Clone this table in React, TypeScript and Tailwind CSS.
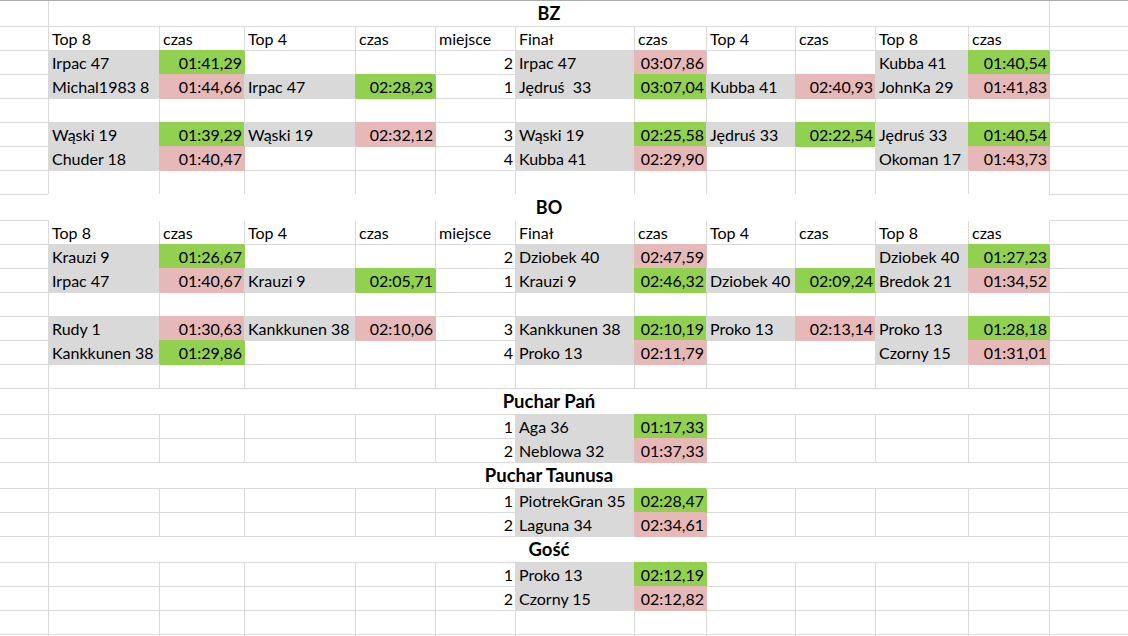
import * as React from "react";

type Fill = "gray" | "green" | "pink" | "white";
type Cell = { t?: string; f?: Fill; r?: boolean };

const FILL: Record<Fill, string> = {
  gray: "bg-[#d9d9d9] border-[#d9d9d9] shadow-[-1px_-1px_0_0_#d9d9d9]",
  green: "bg-[#92d050] border-[#92d050] shadow-[-1px_-1px_0_0_#92d050]",
  pink: "bg-[#e6b8b7] border-[#e6b8b7] shadow-[-1px_-1px_0_0_#e6b8b7]",
  white: "bg-white border-white shadow-[-1px_-1px_0_0_#ffffff]",
};

const n = (t: string): Cell => ({ t, f: "gray" });
const g = (t: string): Cell => ({ t, f: "green", r: true });
const p = (t: string): Cell => ({ t, f: "pink", r: true });
const m = (t: string): Cell => ({ t, r: true });
const e: Cell = {};

const header: Cell[] = ["Top 8", "czas", "Top 4", "czas", "miejsce", "Finał", "czas", "Top 4", "czas", "Top 8", "czas"].map(
  (t) => ({ t })
);
const blank: Cell[] = Array(11).fill(e);

type Row = { title?: string; big?: boolean; whiteTitle?: boolean; cells?: Cell[] };

const rows: Row[] = [
  { title: "BZ", big: true },
  { cells: header },
  { cells: [n("Irpac 47"), g("01:41,29"), e, e, m("2"), n("Irpac 47"), p("03:07,86"), e, e, n("Kubba 41"), g("01:40,54")] },
  {
    cells: [n("Michal1983 8"), p("01:44,66"), n("Irpac 47"), g("02:28,23"), m("1"), n("Jędruś  33"), g("03:07,04"), n("Kubba 41"), p("02:40,93"), n("JohnKa 29"), p("01:41,83")],
  },
  { cells: blank },
  {
    cells: [n("Wąski 19"), g("01:39,29"), n("Wąski 19"), p("02:32,12"), m("3"), n("Wąski 19"), g("02:25,58"), n("Jędruś 33"), g("02:22,54"), n("Jędruś 33"), g("01:40,54")],
  },
  { cells: [n("Chuder 18"), p("01:40,47"), e, e, m("4"), n("Kubba 41"), p("02:29,90"), e, e, n("Okoman 17"), p("01:43,73")] },
  { cells: blank },
  { title: "BO", big: true, whiteTitle: true },
  { cells: header },
  { cells: [n("Krauzi 9"), g("01:26,67"), e, e, m("2"), n("Dziobek 40"), p("02:47,59"), e, e, n("Dziobek 40"), g("01:27,23")] },
  {
    cells: [n("Irpac 47"), p("01:40,67"), n("Krauzi 9"), g("02:05,71"), m("1"), n("Krauzi 9"), g("02:46,32"), n("Dziobek 40"), g("02:09,24"), n("Bredok 21"), p("01:34,52")],
  },
  { cells: blank },
  {
    cells: [n("Rudy 1"), p("01:30,63"), n("Kankkunen 38"), p("02:10,06"), m("3"), n("Kankkunen 38"), g("02:10,19"), n("Proko 13"), p("02:13,14"), n("Proko 13"), g("01:28,18")],
  },
  { cells: [n("Kankkunen 38"), g("01:29,86"), e, e, m("4"), n("Proko 13"), p("02:11,79"), e, e, n("Czorny 15"), p("01:31,01")] },
  { cells: blank },
  { title: "Puchar Pań" },
  { cells: [e, e, e, e, m("1"), n("Aga 36"), g("01:17,33"), e, e, e, e] },
  { cells: [e, e, e, e, m("2"), n("Neblowa 32"), p("01:37,33"), e, e, e, e] },
  { title: "Puchar Taunusa" },
  { cells: [e, e, e, e, m("1"), n("PiotrekGran 35"), g("02:28,47"), e, e, e, e] },
  { cells: [e, e, e, e, m("2"), n("Laguna 34"), p("02:34,61"), e, e, e, e] },
  { title: "Gość" },
  { cells: [e, e, e, e, m("1"), n("Proko 13"), g("02:12,19"), e, e, e, e] },
  { cells: [e, e, e, e, m("2"), n("Czorny 15"), p("02:12,82"), e, e, e, e] },
  { cells: blank },
  { cells: blank },
];

function SheetRow({ row }: { row: Row }) {
  if (row.title) {
    return (
      <>
        <div className="h-[26px] border-r border-b border-[#dadada]" />
        <div
          className={`col-span-11 flex h-[26px] items-center justify-center border-r border-b font-bold leading-[25px] ${
            row.whiteTitle ? FILL.white : "border-[#dadada]"
          } ${row.big ? "text-[18px]" : "text-[18.5px]"}`}
        >
          {row.title}
        </div>
        <div className="h-[26px] border-r border-b border-[#dadada]" />
      </>
    );
  }
  return (
    <>
      <div className="h-6 border-r border-b border-[#dadada]" />
      {row.cells!.map((c, i) => (
        <div
          key={i}
          className={`h-6 overflow-visible whitespace-pre border-r border-b pt-px leading-[22px] ${
            c.f ? FILL[c.f] : "border-[#dadada]"
          } ${c.r ? "pr-[2px] text-right" : "pl-[3px]"}`}
        >
          {c.t}
        </div>
      ))}
      <div className="h-6 border-r border-b border-[#dadada]" />
    </>
  );
}

export default function App() {
  return (
    <div className="h-[636px] w-[1128px] overflow-hidden border-t border-[#ababab] bg-white font-[Lato,sans-serif] text-[16px] text-black">
      <div className="grid w-[1150px] grid-cols-[49px_111px_85px_111px_80px_80px_119px_72px_89px_80px_93px_81px_100px]">
        {rows.map((row, i) => (
          <SheetRow key={i} row={row} />
        ))}
      </div>
    </div>
  );
}
